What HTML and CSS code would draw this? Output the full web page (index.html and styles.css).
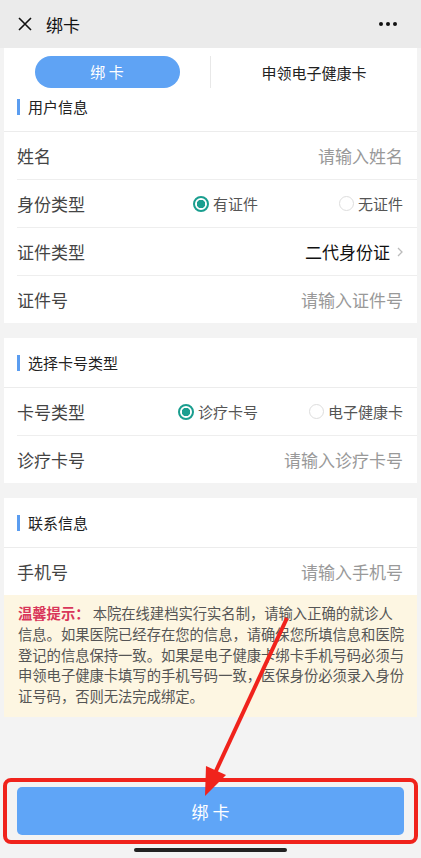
FILE: index.html
```html
<!DOCTYPE html>
<html lang="zh-CN">
<head>
  <meta charset="UTF-8" />
  <meta name="viewport" content="width=device-width, initial-scale=1.0" />
  <title>绑卡</title>
  <link rel="stylesheet" href="styles.css">
</head>
<body>
  <div class="page">
    <div class="topbar">
      <svg class="close" width="14" height="14" viewBox="0 0 14 14">
        <path d="M1 1L13 13M13 1L1 13" stroke="#111" stroke-width="1.6" fill="none" />
      </svg>
      <span class="topbar-title">绑卡</span>
      <span class="more"><i></i><i></i><i></i></span>
    </div>

    <div class="tabs">
      <div class="tab"><span class="tab-pill">绑 卡</span></div>
      <div class="tab-divider"></div>
      <div class="tab">申领电子健康卡</div>
    </div>

    <div class="main">
      <div class="section section-first">
        <div class="section-title">用户信息</div>
        <div class="row">
          <span class="label">姓名</span>
          <span class="placeholder">请输入姓名</span>
        </div>
        <div class="row">
          <span class="label">身份类型</span>
          <div class="radio-group">
            <span class="radio checked"><i></i>有证件</span>
            <span class="radio"><i></i>无证件</span>
          </div>
        </div>
        <div class="row">
          <span class="label">证件类型</span>
          <span class="value">二代身份证
            <svg class="chevron" width="6" height="10" viewBox="0 0 6 10">
              <path d="M1 1L5 5L1 9" stroke="#bbb" stroke-width="1.3" fill="none" />
            </svg>
          </span>
        </div>
        <div class="row">
          <span class="label">证件号</span>
          <span class="placeholder">请输入证件号</span>
        </div>
      </div>

      <div class="section">
        <div class="section-title">选择卡号类型</div>
        <div class="row">
          <span class="label">卡号类型</span>
          <div class="radio-group">
            <span class="radio checked"><i></i>诊疗卡号</span>
            <span class="radio"><i></i>电子健康卡</span>
          </div>
        </div>
        <div class="row">
          <span class="label">诊疗卡号</span>
          <span class="placeholder">请输入诊疗卡号</span>
        </div>
      </div>

      <div class="section">
        <div class="section-title">联系信息</div>
        <div class="row">
          <span class="label">手机号</span>
          <span class="placeholder">请输入手机号</span>
        </div>
      </div>

      <div class="tip">
        <b>温馨提示：</b> 本院在线建档实行实名制，请输入正确的就诊人信息。如果医院已经存在您的信息，请确保您所填信息和医院登记的信息保持一致。如果是电子健康卡绑卡手机号码必须与申领电子健康卡填写的手机号码一致，医保身份必须录入身份证号码，否则无法完成绑定。
      </div>
    </div>

    <div class="footer">
      <button class="submit">绑 卡</button>
      <div class="home-bar"></div>
    </div>

    <!-- red markup drawn over the screenshot -->
    <svg class="annotation" width="421" height="858" viewBox="0 0 421 858">
      <rect x="5" y="780" width="411" height="62" rx="6" fill="none" stroke="#f0231c" stroke-width="4" />
      <line x1="287" y1="618" x2="215" y2="773" stroke="#f0231c" stroke-width="4" />
      <polygon points="205,796 206,766 226,775" fill="#f0231c" />
    </svg>
  </div>
</body>
</html>
```

FILE: styles.css
```css
body {
  margin: 0;
  font-family: "Noto Sans CJK SC", "Noto Sans", sans-serif;
  background: #f3f3f3;
}

.page {
  position: relative;
  width: 421px;
  height: 858px;
  display: flex;
  flex-direction: column;
  overflow: hidden;
  background: #f3f3f3;
}

.topbar {
  height: 48px;
  flex-shrink: 0;
  display: flex;
  align-items: center;
  padding: 0 24px 0 18px;
  background: #ebebeb;
}

.close {
  margin-right: 14px;
}

.topbar-title {
  flex-grow: 1;
  font-size: 17px;
  color: #111;
}

.more {
  display: flex;
  gap: 3px;
}

.more i {
  width: 4px;
  height: 4px;
  border-radius: 50%;
  background: #111;
}

.tabs {
  height: 48px;
  flex-shrink: 0;
  margin: 0 4px;
  display: flex;
  align-items: center;
  background: white;
  position: relative;
  z-index: 1;
}

.tab {
  flex: 1;
  display: flex;
  justify-content: center;
  font-size: 15px;
  color: #222;
}

.tab-pill {
  width: 145px;
  height: 32px;
  line-height: 32px;
  text-align: center;
  border-radius: 16px;
  background: #5fa3f4;
  color: white;
}

.tab-divider {
  width: 1px;
  height: 32px;
  background: #e8e8e8;
}

.main {
  flex: 1;
  padding: 0 4px;
  overflow: hidden;
}

.section {
  background: white;
  margin-top: 15px;
}

.section-first {
  margin-top: -14px;
}

.section-title {
  height: 49px;
  display: flex;
  align-items: center;
  padding-left: 13px;
  font-size: 15px;
  color: #222;
  border-bottom: 1px solid #ececec;
}

.section-title::before {
  content: "";
  width: 3px;
  height: 16px;
  margin-right: 8px;
  background: #5b9df0;
}

.row {
  height: 47px;
  margin-left: 13px;
  padding-right: 14px;
  display: flex;
  align-items: center;
  justify-content: space-between;
  border-bottom: 1px solid #eeeeee;
}

.row:last-child {
  border-bottom: none;
}

.label {
  font-size: 17px;
  color: #444;
}

.placeholder {
  font-size: 17px;
  color: #999;
}

.value {
  display: flex;
  align-items: center;
  gap: 7px;
  font-size: 17px;
  color: #111;
}

.radio-group {
  display: flex;
}

.radio {
  width: 145px;
  display: flex;
  align-items: center;
  justify-content: flex-end;
  gap: 4px;
  font-size: 15px;
  color: #555;
}

.radio i {
  box-sizing: border-box;
  width: 15px;
  height: 15px;
  border-radius: 50%;
  border: 1px solid #dddddd;
}

.radio.checked i {
  width: 16px;
  height: 16px;
  border: 2px solid #1a9e8f;
  background: radial-gradient(circle, #1a9e8f 0 4px, white 4.5px);
}

.tip {
  padding: 8px 12px 10px 14px;
  font-size: 14.3px;
  line-height: 20.8px;
  color: #555;
  background: #fdf6e2;
}

.tip b {
  color: #d9365a;
}

.footer {
  height: 80px;
  flex-shrink: 0;
  box-sizing: border-box;
  padding: 9px 17px 0;
  display: flex;
  flex-direction: column;
  align-items: center;
}

.submit {
  width: 100%;
  height: 48px;
  border: none;
  border-radius: 5px;
  background: #5fa5f7;
  color: white;
  font-family: inherit;
  font-size: 17px;
}

.home-bar {
  width: 153px;
  height: 4px;
  margin-top: 13px;
  border-radius: 2px;
  background: #222;
}

.annotation {
  position: absolute;
  top: 0;
  left: 0;
  pointer-events: none;
}
```
